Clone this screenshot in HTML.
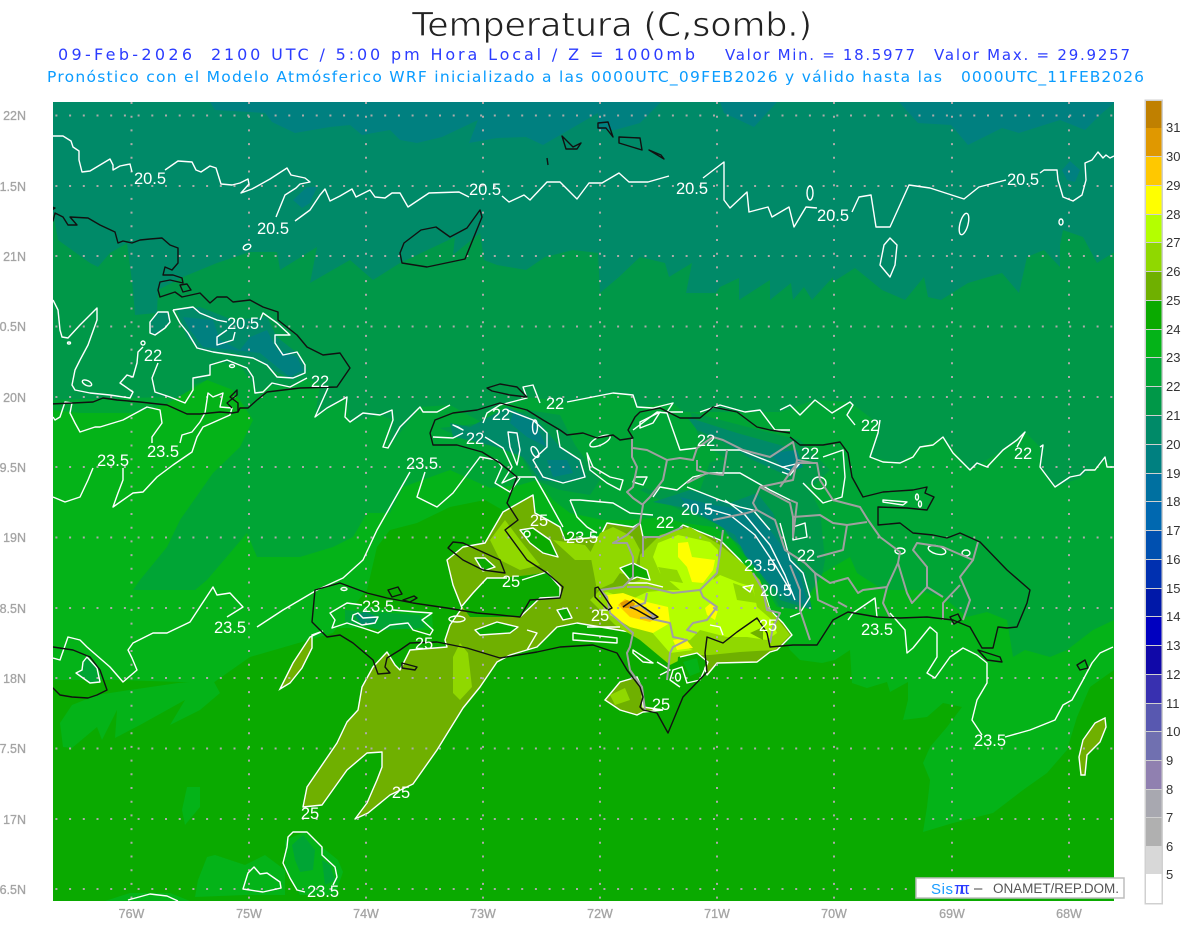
<!DOCTYPE html>
<html><head><meta charset="utf-8"><title>Temperatura</title>
<style>
html,body{margin:0;padding:0;background:#fff;width:1200px;height:927px;overflow:hidden}
svg{display:block;font-family:"Liberation Sans",sans-serif}
.w{fill:none;stroke:#fff;stroke-width:1.4;stroke-linejoin:round}
.k{fill:none;stroke:#111;stroke-width:1.4;stroke-linejoin:round}
.g{fill:none;stroke:#a0a0a0;stroke-width:2;stroke-linejoin:round}
.l text{fill:#fff;font-size:16.5px;text-anchor:middle}
.ax text{fill:#a4a4a4;font-size:12.5px;stroke:#a4a4a4;stroke-width:.3}
.cb text{fill:#333;font-size:13px}
.d{font-family:"DejaVu Sans",sans-serif}
</style></head><body>
<svg width="1200" height="927" viewBox="0 0 1200 927" xmlns="http://www.w3.org/2000/svg">
<rect width="1200" height="927" fill="#fff"/>
<text class="d" x="412" y="36" font-size="33" fill="#222" stroke="#fff" stroke-width=".7" textLength="400" lengthAdjust="spacingAndGlyphs">Temperatura (C,somb.)</text>
<g class="d" font-size="16" fill="#2b3cff">
<text x="58" y="60" textLength="134" lengthAdjust="spacing">09-Feb-2026</text>
<text x="211" y="60" textLength="484" lengthAdjust="spacing">2100 UTC / 5:00 pm Hora Local / Z = 1000mb</text>
<text x="725" y="60" font-size="15" textLength="190" lengthAdjust="spacing">Valor Min. = 18.5977</text>
<text x="934" y="60" font-size="15" textLength="196" lengthAdjust="spacing">Valor Max. = 29.9257</text>
</g>
<g class="d" font-size="15.5" fill="#0a9cff">
<text x="47" y="82" textLength="895" lengthAdjust="spacing">Pronóstico con el Modelo Atmósferico WRF inicializado a las 0000UTC_09FEB2026 y válido hasta las</text>
<text x="961" y="82" textLength="183" lengthAdjust="spacing">0000UTC_11FEB2026</text>
</g>
<svg x="53" y="102" width="1061" height="799" viewBox="53 102 1061 799">
<rect x="53" y="102" width="1061" height="799" fill="#008a68"/>
<g fill="#008080">
<polygon points="210,102 215,110 265,113 272,122 295,133 330,127 350,125 362,135 390,130 400,140 417,143 442,137 478,120 469,143 497,138 526,137 543,145 598,113 598,130 615,130 640,123 661,102"/>
<polygon points="720,102 724,113 754,127 777,102"/>
<polygon points="899,102 918,123 951,125 968,145 1002,128 1019,133 1060,120 1085,130 1100,115 1115,102"/>
<polygon points="293,200 307,187 317,187 310,203 302,208"/>
<polygon points="1062,170 1070,161 1080,170 1075,182 1067,180"/>
</g>
<polygon fill="#009848" points="53,213 58,240 90,263 98,267 110,253 127,243 133,290 135,315 157,313 158,290 183,277 217,263 250,252 277,252 280,270 317,247 310,283 350,260 373,280 400,263 455,237 453,255 480,233 484,260 497,265 526,270 545,257 573,250 598,253 600,293 619,277 640,257 665,263 669,277 692,263 686,293 716,293 720,287 739,278 739,300 770,280 770,300 791,283 793,300 804,287 812,300 833,277 833,282 855,268 882,290 905,300 924,277 928,297 941,300 968,283 1002,273 1019,293 1027,257 1044,250 1060,267 1060,245 1063,230 1083,237 1097,263 1113,253 1114,253 1114,901 53,901"/>
<polygon fill="#00a535" points="53,400 130,398 170,397 185,403 193,385 207,380 215,362 240,365 253,385 255,395 270,385 290,387 307,378 320,385 315,417 347,397 350,422 380,415 393,420 388,448 420,407 450,405 483,423 487,413 500,405 527,397 567,402 613,393 633,395 637,407 673,403 683,412 780,412 815,400 850,402 880,425 870,457 900,463 920,447 943,437 970,470 1003,450 1025,432 1040,447 1040,467 1055,487 1080,478 1105,460 1114,467 1114,901 53,901"/>
<g fill="#009848">
<polygon points="440,428 483,423 527,410 560,415 575,445 600,480 590,495 560,490 535,480 520,455 500,448 465,440"/>
<polygon points="640,490 680,470 720,460 770,460 800,470 820,510 825,560 815,610 790,625 770,590 750,555 720,525 680,510"/>
<polygon points="690,412 740,425 800,440 830,470 815,485 780,480 740,470 700,440"/>
</g>
<polygon fill="#04b318" points="53,410 80,413 133,413 165,405 207,380 233,390 253,420 240,447 213,473 180,520 167,547 140,580 133,590 195,590 207,580 247,533 257,557 300,557 333,547 353,537 367,513 390,513 403,487 450,470 490,488 520,485 537,480 553,500 570,513 603,520 630,520 663,517 683,523 713,527 730,537 750,563 777,607 800,610 823,573 850,557 857,573 883,590 917,590 943,597 967,617 987,612 1007,620 1013,657 1025,650 1050,657 1067,650 1093,630 1114,620 1114,901 53,901"/>
<polygon fill="#00a535" points="610,470 650,455 710,462 700,490 650,490"/>
<polygon fill="#0aaa00" points="53,680 120,680 213,683 250,657 333,633 350,610 367,590 377,547 390,530 417,523 450,507 485,500 520,520 600,540 720,540 777,620 790,650 800,660 822,663 835,660 850,650 852,683 867,688 887,682 890,692 908,682 908,700 903,720 927,717 943,703 962,707 947,727 930,747 923,763 930,780 927,807 923,832 953,823 993,813 1023,790 1047,773 1067,750 1077,717 1090,687 1114,670 1114,901 53,901"/>
<g fill="#04b318">
<polygon points="60,723 72,705 97,695 130,690 178,683 213,680 220,693 200,710 170,725 185,700 140,725 115,738 117,710 102,740 97,727 72,748 63,747"/>
<polygon points="207,857 215,855 245,865 265,855 285,870 285,895 245,895 195,897 198,880"/>
<polygon points="105,901 130,893 170,893 190,901"/>
<polygon points="187,787 200,787 200,807 185,825 182,810"/>
<polygon points="285,840 305,832 322,847 338,860 343,872 335,895 300,895 285,870"/>
<polygon points="330,613 347,603 393,610 432,613 433,630 413,630 390,625 363,628 332,628"/>
</g>
<g fill="#00a535">
<polygon points="292,845 303,835 315,850 313,870 300,872 295,860"/>
<polygon points="322,860 330,865 335,880 325,885"/>
<polygon points="87,657 97,668 100,682 90,683 76,673 82,670 83,662"/>
<polygon points="345,610 420,615 425,628 380,630 345,622"/>
</g>
<polygon fill="#008a68" points="177,310 200,307 233,320 267,317 277,337 297,353 307,370 293,380 273,370 260,360 233,353 200,350 187,337"/>
<polygon fill="#008080" points="183,317 213,320 220,340 240,350 250,337 267,330 277,350 297,357 303,370 290,377 277,367 260,353 233,350 203,347 190,330"/>
<polygon fill="#008a68" points="150,322 158,312 168,312 170,322 165,328 155,335 150,333"/>
<polygon fill="#008a68" points="450,423 470,427 507,407 537,420 560,447 577,457 587,477 567,483 540,480 523,457 497,447 470,440 453,437"/>
<polygon fill="#008080" points="513,413 533,420 547,447 527,437 510,423"/>
<polygon fill="#008080" points="547,460 567,460 573,473 553,477"/>
<polygon fill="#008a68" points="687,417 737,433 787,447 800,460 790,477 753,460 720,440 697,430"/>
<polygon fill="#008080" points="770,453 797,450 803,467 787,473"/>
<polygon fill="#008a68" points="653,502 690,490 730,503 757,493 773,513 785,547 805,573 812,610 780,600 763,565 730,537 713,513 680,507"/>
<polygon fill="#008080" points="680,497 713,505 750,510 770,530 785,550 800,575 808,605 790,600 770,585 745,555 735,535 710,520 690,510"/>
<polygon fill="#008a68" points="355,615 365,612 378,617 375,623 362,625"/>
<polygon class="w" style="fill:#6fb000" points="447,560 463,547 485,543 503,512 533,495 535,513 548,520 560,527 565,540 600,537 607,523 633,527 640,523 643,537 670,537 683,525 703,533 720,540 730,550 740,560 753,577 763,587 770,610 783,623 792,635 777,650 770,652 757,662 717,663 707,675 700,655 677,657 665,640 640,635 630,632 577,623 557,627 537,647 510,655 497,662 480,687 463,708 437,750 413,784 390,795 368,813 355,819 367,803 377,780 382,767 382,752 367,753 347,770 322,805 303,807 307,787 337,743 347,722 358,710 362,687 373,667 387,652 395,665 400,670 410,650 447,647 445,640 450,625 462,608 453,585"/>
<polygon fill="#6fb000" stroke="#fff" stroke-width="1.4" points="605,700 620,682 637,677 642,688 643,707 663,710 643,712 637,715 620,710"/>
<polygon fill="#6fb000" stroke="#fff" stroke-width="1.4" points="280,689 293,663 310,637 323,631 312,635 312,648 302,668 290,683"/>
<polygon fill="#6fb000" stroke="#fff" stroke-width="1.4" points="1079,757 1083,740 1095,723 1105,718 1106,727 1100,742 1087,755 1085,775 1081,775"/>
<polygon fill="#0aaa00" points="462,606 473,593 487,578 500,578 530,575 547,572 560,587 560,597 540,598 520,617 497,617 470,617"/>
<polygon fill="#90d800" points="640,555 660,535 690,527 720,545 745,565 760,580 770,610 790,635 775,650 740,652 710,655 690,655 670,665 640,640 615,625 590,600 600,590 625,585 640,580"/>
<polygon fill="#90d800" points="590,553 600,533 613,527 633,537 640,550 633,577 620,573 613,583 597,590"/>
<polygon fill="#90d800" points="490,540 505,520 520,540 540,565 520,570 500,560"/>
<polygon fill="#90d800" points="553,540 585,545 597,560 575,560"/>
<polygon fill="#90d800" points="453,657 460,643 468,653 472,687 460,700 453,693"/>
<polygon fill="#90d800" points="610,695 625,688 630,700 615,705"/>
<polygon fill="#b4ff00" points="658,543 678,535 710,542 718,550 718,567 712,583 702,588 720,575 740,583 753,587 757,607 772,620 777,633 767,640 747,637 727,637 700,630 690,640 673,643 693,650 670,653 650,630 623,620 610,610 603,593 607,592 630,600 647,592 670,590 680,590 660,573 653,557"/>
<polygon fill="#90d800" points="658,567 677,570 683,583 663,580"/>
<polygon fill="#90d800" points="733,583 753,590 757,603 737,600"/>
<polygon fill="#6fb000" points="750,633 763,627 763,640"/>
<polygon fill="#ffff00" points="678,543 688,542 692,557 715,560 713,570 703,583 692,582 687,567 678,557"/>
<polygon fill="#ffff00" points="607,595 623,593 647,602 668,607 670,623 653,633 630,627 610,615"/>
<polygon fill="#ffff00" points="705,608 712,602 718,610 715,620 707,615"/>
<polygon fill="#ffff00" points="673,640 685,638 693,648 677,650"/>
<polygon fill="#ffc800" points="618,605 625,599 640,607 658,617 650,622 630,617"/>
<polygon fill="#e09800" points="620,603 627,600 635,603 633,608 623,608"/>
<polygon fill="#0aaa00" points="620,568 633,563 647,570 650,580 637,577 630,580"/>
<polygon fill="#0aaa00" points="678,657 697,653 707,660 700,680 690,683 683,670 677,670"/>
<polygon fill="#04b318" points="683,662 697,658 700,672 690,676"/>
<polygon fill="#0aaa00" points="520,530 533,528 550,540 558,557 543,553 530,543"/>
<polygon fill="#0aaa00" points="475,558 485,558 495,567 483,571"/>
<polygon fill="#0aaa00" points="573,633 617,638 617,643 573,640"/>
<polygon fill="#0aaa00" points="475,630 497,622 518,627 510,633 480,635"/>
<polygon fill="#0aaa00" points="633,650 653,663 643,662 633,653"/>
<polygon fill="#0aaa00" points="557,610 567,608 572,618 563,620"/>
<g stroke="#aeaaaa" stroke-width="2" stroke-dasharray="2 11.7" fill="none">
<path d="M28 115.5H1135M28 186H1135M28 256H1135M28 326.5H1135M28 397H1135M28 467H1135M28 537.5H1135M28 608H1135M28 678H1135M28 748.5H1135M28 819H1135M28 889H1135"/>
<path d="M131.5 102V907M249 102V907M366 102V907M483 102V907M600 102V907M717 102V907M834 102V907M952 102V907M1069 102V907"/>
</g>
<g class="w">
<polyline points="53,136 63,136 71,141 73,147 79,151 79,160 81,168 82,172 90,171 100,165 110,159 113,165 113,170 120,166 130,164 132,172"/>
<polyline points="165,170 178,161 192,162 196,170 201,172 210,166 216,168 221,184 232,185 240,183 248,179 249,184 241,193 252,189 270,179 287,168 291,175 305,178 310,182 300,184 296,188 285,195 276,217"/>
<polyline points="295,221 310,210 320,195 325,189 330,201 340,196 352,189 356,197 370,190 375,197 385,198 392,193 400,193 408,207 429,193 459,192 469,197"/>
<polyline points="502,196 509,202 524,195 530,200 547,182 560,182 577,199 589,183 602,183 619,173 629,182 648,182 669,176"/>
<polyline points="703,178 724,162 724,200 730,208 747,192 749,212 768,207 772,217 789,207 794,227 806,207 817,208"/>
<polyline points="852,212 859,197 871,195 876,227 890,227 909,185 930,188 964,199 979,187 1006,180"/>
<polyline points="1040,173 1044,170 1057,170 1058,180 1063,197 1073,201 1082,195 1086,180 1085,163 1092,160 1098,152 1103,158 1106,155 1110,158 1114,156"/>
<ellipse cx="247" cy="247" rx="4" ry="2.5" transform="rotate(-25 247 247)"/>
<ellipse cx="810" cy="193" rx="3" ry="7"/>
<ellipse cx="1061" cy="222" rx="2" ry="3"/>
<ellipse cx="964" cy="224" rx="4" ry="11" transform="rotate(15 964 224)"/>
<polygon points="890,238 897,245 895,265 890,277 880,265 884,245"/>
<polygon points="150,322 158,312 168,312 170,322 165,328 155,335 150,333"/>
<polyline points="173,310 193,307 200,313 217,320 227,322"/>
<polyline points="227,330 217,337 217,345 233,340 235,332"/>
<polyline points="173,310 180,323 188,333 197,348 213,352 233,355 253,358 267,365 277,377 293,378 305,373 305,365 297,352 283,355 275,343 275,335 290,335 277,323 263,313 260,320"/>
<polyline points="53,300 58,310 60,330 62,337 68,338 80,325 97,308 97,320 88,345 80,360 75,370 72,385 75,390 90,393 110,395 130,398 133,392 120,383 127,375 133,377 137,363 138,352 143,347"/>
<circle cx="143" cy="343" r="2"/>
<ellipse cx="69" cy="343" rx="1.5" ry="1"/>
<ellipse cx="87" cy="383" rx="5" ry="2.5" transform="rotate(25 87 383)"/>
<polyline points="158,363 152,378 155,392 170,397 185,403 193,390 193,378 210,375 210,365 227,360 247,368 253,377 255,393 263,392 272,383 290,387 307,378"/>
<ellipse cx="232" cy="366" rx="2.5" ry="1.5"/>
<polyline points="328,388 315,417 327,408 347,397 345,417 350,422 363,413 380,415 392,410 393,420 383,447 388,448 400,427 420,407 423,412 437,412 450,405"/>
<polyline points="567,402 613,393 633,395 637,407 653,408 673,403 667,412 683,412"/>
<polyline points="483,423 487,413 500,405 527,398 523,387 533,385 540,403"/>
<polyline points="433,437 453,438 463,433"/>
<polyline points="485,437 503,448 512,467 502,483 515,477 535,477 547,498 563,527"/>
<polygon points="453,425 463,430 458,427"/>
<polygon points="508,432 517,433 520,450 517,465 510,447"/>
<ellipse cx="535" cy="427" rx="2.5" ry="7"/>
<ellipse cx="535" cy="452" rx="3" ry="6" transform="rotate(-30 535 452)"/>
<polyline points="507,410 533,420 547,433 547,447 533,460 543,477 563,483 585,477 580,460 560,447 557,430"/>
<polygon points="587,453 593,467 610,477 623,480 620,490 607,483 590,470"/>
<polyline points="570,500 580,500 613,503 630,513 653,515"/>
<polyline points="570,500 577,517 587,527 597,533"/>
<polygon points="635,477 647,477 643,485 633,482"/>
<ellipse cx="600" cy="441" rx="11" ry="4" transform="rotate(-25 600 441)"/>
<polyline points="633,430 657,412 667,413 680,450 697,448"/>
<polygon points="640,422 660,412 653,423 640,428"/>
<polyline points="653,497 660,487 677,490 693,477 710,473 740,473 770,490 790,500"/>
<polyline points="687,487 720,500 740,507 753,510 770,530"/>
<polyline points="725,500 745,515 770,545 785,575 795,600"/>
<polyline points="705,508 730,515 755,535 775,565 790,590"/>
<polyline points="780,523 790,560 803,573 810,597 800,613 790,617"/>
<polygon points="793,527 805,523 807,537 793,540"/>
<ellipse cx="819" cy="483" rx="7" ry="6"/>
<polyline points="783,467 800,463 790,475 782,472"/>
<polyline points="823,457 843,450 845,477 842,497 823,503 803,483"/>
<polyline points="710,450 740,450 790,470"/>
<polygon points="883,500 907,502 903,505 883,502"/>
<ellipse cx="937" cy="550" rx="9" ry="4" transform="rotate(15 937 550)"/>
<ellipse cx="966" cy="553" rx="4" ry="3"/>
<ellipse cx="900" cy="551" rx="5" ry="3"/>
<ellipse cx="917" cy="497" rx="1.5" ry="3"/>
<ellipse cx="920" cy="504" rx="1.5" ry="3"/>
<polyline points="700,412 720,405 745,412 760,410 775,430 790,430"/>
<polyline points="880,420 878,433 870,457 883,462 900,463 913,457 920,447 933,445 943,437 953,453 970,470 977,463 987,467 1003,450 1017,440 1025,432 1017,447"/>
<polyline points="1040,447 1043,445 1040,467 1055,487 1070,477 1080,475 1085,470 1095,470 1105,457 1107,467 1114,467"/>
<polyline points="780,410 790,405 800,415 815,400 832,413 850,402 853,405 847,415 855,425"/>
<polyline points="53,497 65,502 80,497 88,480 93,468"/>
<polyline points="123,468 123,480 118,493 113,507 133,493 143,492 157,477 173,465 192,452 197,437 203,427 230,415 232,408 220,407 223,393 213,397 208,393 205,413 200,422 192,432 182,435 180,443"/>
<polyline points="152,443 152,437 162,423 160,410 147,407 123,420 100,427 95,427 80,432 75,423 70,413 72,403 65,402 60,417 55,420 53,417"/>
<polyline points="410,472 377,530 363,560 343,578 317,590 283,610 257,627"/>
<polyline points="227,617 243,607 230,593 217,595 213,587 190,622 167,633 153,633 133,643 128,650 132,658 137,670 123,682 110,667 87,647 80,640 68,637 60,660 53,658"/>
<polyline points="425,472 417,497 437,507 453,493 480,457 497,460 502,467 495,483 510,492 520,478"/>
<polyline points="848,620 853,613 875,598 877,617"/>
<polyline points="890,613 905,630 907,653 913,648 930,627 937,633 937,657 927,673 935,678 950,657 963,648 977,655 987,663 987,683 977,700 972,720 982,735"/>
<polyline points="1005,737 1030,730 1050,722 1055,720 1063,705 1072,700 1083,680 1092,663 1100,653 1113,647"/>
<polyline points="333,885 337,877 335,867 322,855 322,847 307,832 293,832 288,837 287,847 283,863 290,878 297,890 305,892"/>
<polygon points="254,867 260,874 267,873 280,882 281,888 263,892 243,889 248,873"/>
<polyline points="128,900 150,894 167,896 178,901"/>
<polygon points="87,657 97,668 100,682 90,683 76,673 82,670 83,662"/>
<polyline points="362,605 347,603 330,613 335,620 332,628 347,623 363,628 378,633 390,625 408,623 413,630 430,635 433,630 422,620 432,613 417,612 393,610"/>
<polygon points="353,615 358,613 363,618 378,617 375,623 362,625 352,620"/>
<ellipse cx="344" cy="589" rx="3" ry="1.5"/>
<ellipse cx="457" cy="619" rx="8" ry="3"/>
<polyline points="462,606 473,593 487,578 507,578"/>
<polyline points="522,580 547,572 560,587 560,597 540,598 520,617"/>
<polygon points="520,530 533,528 550,540 558,557 543,553 530,543"/>
<circle cx="527" cy="534" r="3"/>
<polygon points="475,558 485,558 495,567 483,571"/>
<polygon points="557,610 567,608 572,618 563,620"/>
<polygon points="475,630 497,622 518,627 510,633 480,635"/>
<polyline points="527,630 537,633 527,650"/>
<polygon points="573,633 617,638 617,643 573,640"/>
<polyline points="587,627 620,627"/>
<polygon points="620,568 633,563 647,570 650,580 637,577 630,580"/>
<polyline points="627,583 647,583 663,587"/>
<polygon points="633,650 653,663 643,662 633,653"/>
<polyline points="657,662 670,670 660,675"/>
<polyline points="680,657 697,653 708,662 700,680 687,683 682,667 673,670 670,680 680,687"/>
<ellipse cx="678" cy="677" rx="2.5" ry="4"/>
<polygon points="743,587 753,585 750,592"/>
<polyline points="710,625 720,627 723,635"/>
</g>
<g class="g">
<polyline points="632,438 632,457 637,467 633,487 627,492 633,498 643,505 640,523 627,535 613,543 627,543 633,557 633,577 623,587 600,590 607,597 610,613 633,633 630,647 627,653 630,670 642,687 645,710"/>
<polyline points="627,587 647,587 673,593 700,590 717,573 720,553 723,530"/>
<polyline points="643,557 643,537 660,537 683,527"/>
<polyline points="647,593 645,603 630,608 640,605 655,617 640,618"/>
<polyline points="647,618 670,623 673,637 687,640 673,647 670,653 667,680"/>
<polyline points="700,590 703,597 717,607 707,620 693,623 687,630 697,633"/>
<polyline points="753,573 763,590 767,610 780,613 773,627 770,643"/>
<polyline points="633,448 647,450 667,460 680,458 693,460 697,448 713,437 723,440 743,450 770,457 793,442 797,460 813,463"/>
<polyline points="667,460 663,480 650,497 642,505"/>
<polyline points="697,460 697,470 707,473 687,483"/>
<polyline points="707,473 723,475 727,450"/>
<polyline points="797,460 793,480 760,487 753,503 757,510 747,513 713,520"/>
<polyline points="760,487 790,503 793,517"/>
<polyline points="780,487 797,463 817,463 820,480 833,500 860,507 868,520 880,537 900,552 898,563 887,587 883,603 890,617"/>
<polyline points="793,517 820,515 833,523 847,525 867,522"/>
<polyline points="847,525 843,550 817,557"/>
<polyline points="793,517 793,537 797,503 790,500"/>
<polyline points="898,563 907,593 912,603 927,587 927,567 913,550 917,543 943,547 973,560 978,542"/>
<polyline points="973,560 960,577 970,600 963,620"/>
<polyline points="960,585 943,603 943,620"/>
<polyline points="927,587 943,597"/>
<polyline points="887,587 863,590 858,593 848,578 830,583 815,573 818,600 835,608 837,613"/>
<polyline points="838,602 847,607"/>
<polyline points="805,563 815,573"/>
<polyline points="790,565 800,590 800,610 810,640"/>
<polyline points="757,510 775,520 785,550 805,563"/>
</g>
<g class="k">
<polyline points="35,205 40,203 55,208 47,213 53,221 55,213 63,217 68,225 77,225 70,217 88,218 100,225 115,232 118,243 123,241 132,243 140,240 150,239 162,238 170,245 178,248 178,263 172,270 165,267 163,275 173,275 182,278 183,283 170,280 160,282 158,290 160,297 175,292 182,297 200,293 210,303 217,297 227,297 233,302 250,300 263,307 278,312 278,320 297,335 307,347 323,355 340,353 350,368 337,387 300,388 267,392 257,400 248,408 240,408 238,412 232,413 220,412 200,414 187,414 167,405 140,402 117,400 103,398 93,402 73,403 50,404 35,407"/>
<polyline points="232,408 227,403 237,395 237,390 230,397 238,403 238,412"/>
<polygon points="180,285 187,284 191,290 183,292"/>
<polygon points="598,123 608,122 613,137 606,128 598,128"/>
<polygon points="619,137 640,138 642,150 619,143"/>
<polygon points="649,150 661,155 664,159"/>
<polygon points="562,136 573,147 581,143 577,149 566,149"/>
<polyline points="547,158 548,165"/>
<polygon points="402,263 427,267 465,259 482,217 480,210 467,228 450,237 436,227 421,230 404,243 400,253"/>
<polygon points="487,388 500,384 517,387 527,397 510,395 492,391"/>
<polyline points="430,433 435,420 453,413 477,410 500,403 527,410 543,420 560,430 567,435 583,433 597,438 613,435 620,440 633,438 628,430 635,417 640,412 660,408 680,418 700,418 713,407 737,412 757,427 770,430 790,433"/>
<polyline points="790,437 800,445 823,445 840,442 848,453 852,477 863,497 883,492 913,490 927,487 925,493 934,497 927,510 907,508 878,507 878,525 900,523 913,533 933,535 947,538 960,533 980,542 1007,570 1030,590 1027,603 1017,627 1007,628 998,627 993,648 982,648 970,627 953,620 927,617 900,618 877,617 848,612 833,620 817,645 793,645 770,647 767,633 757,618 737,632 723,643 707,637 705,653 707,672 683,697 668,733 657,713 643,710 640,707 643,697 640,687 627,670 617,653 593,645 560,647 537,652 500,658 467,648 437,642 410,643 400,650 387,658 385,667 390,673 378,674 373,660 353,643 340,635 327,637 312,622 315,590 340,583 367,593 387,598 413,603 447,608 477,613 500,615 520,617 530,600 560,598 563,587 547,573 527,560 505,530 518,520 507,503 517,477 500,463 482,452 457,445 433,445 430,433"/>
<polygon points="448,548 453,542 463,543 500,560 505,573 483,570 463,560"/>
<polygon points="402,663 417,667 415,670 402,668"/>
<polygon points="388,590 398,587 402,594 392,597"/>
<polygon points="403,600 414,596 417,598 410,602"/>
<polyline points="35,633 40,640 53,647 73,650 90,657 100,670 107,690 97,695 88,698 72,697 60,695 53,688 37,687 42,685 35,682"/>
<polyline points="623,607 633,600 658,617 653,619 637,610 630,607"/>
<polygon points="595,588 598,587 612,608 608,610 595,597"/>
<polygon points="978,650 1000,657 1002,662 987,660"/>
<polygon points="1077,665 1085,660 1088,668 1080,670"/>
<polygon points="950,617 958,614 961,620 954,624"/>
</g>
</svg>
<g class="l">
<text x="150" y="184">20.5</text><text x="273" y="234">20.5</text><text x="485" y="195">20.5</text><text x="692" y="194">20.5</text><text x="833" y="221">20.5</text><text x="1023" y="185">20.5</text><text x="243" y="329">20.5</text><text x="697" y="515">20.5</text><text x="776" y="596">20.5</text>
<text x="153" y="361">22</text><text x="320" y="387">22</text><text x="501" y="420">22</text><text x="475" y="444">22</text><text x="555" y="409">22</text><text x="706" y="446">22</text><text x="810" y="459">22</text><text x="870" y="431">22</text><text x="1023" y="459">22</text><text x="665" y="528">22</text><text x="806" y="561">22</text>
<text x="113" y="466">23.5</text><text x="163" y="457">23.5</text><text x="422" y="469">23.5</text><text x="582" y="543">23.5</text><text x="378" y="612">23.5</text><text x="230" y="633">23.5</text><text x="877" y="635">23.5</text><text x="990" y="746">23.5</text><text x="323" y="897">23.5</text><text x="760" y="571">23.5</text>
<text x="539" y="526">25</text><text x="511" y="587">25</text><text x="600" y="621">25</text><text x="424" y="649">25</text><text x="768" y="631">25</text><text x="661" y="710">25</text><text x="401" y="798">25</text><text x="310" y="819">25</text>
</g>
<g class="ax" text-anchor="end">
<text x="26" y="120">22N</text><text x="26" y="191">1.5N</text><text x="26" y="261">21N</text><text x="26" y="331">0.5N</text><text x="26" y="402">20N</text><text x="26" y="472">9.5N</text><text x="26" y="542">19N</text><text x="26" y="613">8.5N</text><text x="26" y="683">18N</text><text x="26" y="753">7.5N</text><text x="26" y="824">17N</text><text x="26" y="894">6.5N</text>
</g>
<g class="ax" text-anchor="middle">
<text x="131.5" y="918">76W</text><text x="249" y="918">75W</text><text x="366" y="918">74W</text><text x="483" y="918">73W</text><text x="600" y="918">72W</text><text x="717" y="918">71W</text><text x="834" y="918">70W</text><text x="952" y="918">69W</text><text x="1069" y="918">68W</text>
</g>
<rect x="916" y="878" width="208" height="20" fill="#fff" stroke="#bdbdbd" stroke-width="1.5"/>
<text x="931" y="894" font-size="15" fill="#1a9cff" textLength="22">Sis</text>
<text x="954" y="894" font-size="17" fill="#2b3cff" textLength="16">ππ</text>
<text x="974" y="893" font-size="15" fill="#444">–</text>
<text x="993" y="893" font-size="13.5" fill="#555" textLength="126" lengthAdjust="spacing">ONAMET/REP.DOM.</text>
<rect x="1144.5" y="99.5" width="18.5" height="805" fill="#d0d0d0"/>
<g>
<rect x="1146" y="101" width="15.5" height="27" fill="#c08000"/>
<rect x="1146" y="128" width="15.5" height="28" fill="#e09800"/>
<rect x="1146" y="157" width="15.5" height="28" fill="#ffc800"/>
<rect x="1146" y="186" width="15.5" height="28" fill="#ffff00"/>
<rect x="1146" y="215" width="15.5" height="27" fill="#b4ff00"/>
<rect x="1146" y="243" width="15.5" height="28" fill="#90d800"/>
<rect x="1146" y="272" width="15.5" height="28" fill="#6fb000"/>
<rect x="1146" y="301" width="15.5" height="28" fill="#0aaa00"/>
<rect x="1146" y="330" width="15.5" height="27" fill="#04b318"/>
<rect x="1146" y="358" width="15.5" height="28" fill="#00a535"/>
<rect x="1146" y="387" width="15.5" height="28" fill="#009848"/>
<rect x="1146" y="416" width="15.5" height="28" fill="#008a68"/>
<rect x="1146" y="445" width="15.5" height="28" fill="#008080"/>
<rect x="1146" y="474" width="15.5" height="27" fill="#0070a0"/>
<rect x="1146" y="502" width="15.5" height="28" fill="#0068b0"/>
<rect x="1146" y="531" width="15.5" height="28" fill="#0050b0"/>
<rect x="1146" y="560" width="15.5" height="28" fill="#0030b0"/>
<rect x="1146" y="589" width="15.5" height="27" fill="#0018a8"/>
<rect x="1146" y="617" width="15.5" height="28" fill="#0000c0"/>
<rect x="1146" y="646" width="15.5" height="28" fill="#1008a8"/>
<rect x="1146" y="675" width="15.5" height="28" fill="#3830b0"/>
<rect x="1146" y="704" width="15.5" height="27" fill="#5858b0"/>
<rect x="1146" y="732" width="15.5" height="28" fill="#7070b0"/>
<rect x="1146" y="761" width="15.5" height="28" fill="#9080b0"/>
<rect x="1146" y="790" width="15.5" height="27" fill="#a8a8b0"/>
<rect x="1146" y="818" width="15.5" height="28" fill="#b0b0b0"/>
<rect x="1146" y="846" width="15.5" height="28" fill="#d8d8d8"/>
<rect x="1146" y="874" width="15.5" height="29" fill="#ffffff"/>
</g>
<g class="cb">
<text x="1166" y="132">31</text><text x="1166" y="161">30</text><text x="1166" y="190">29</text><text x="1166" y="219">28</text><text x="1166" y="247">27</text><text x="1166" y="276">26</text><text x="1166" y="305">25</text><text x="1166" y="334">24</text><text x="1166" y="362">23</text><text x="1166" y="391">22</text><text x="1166" y="420">21</text><text x="1166" y="449">20</text><text x="1166" y="478">19</text><text x="1166" y="506">18</text><text x="1166" y="535">17</text><text x="1166" y="564">16</text><text x="1166" y="593">15</text><text x="1166" y="621">14</text><text x="1166" y="650">13</text><text x="1166" y="679">12</text><text x="1166" y="708">11</text><text x="1166" y="736">10</text><text x="1166" y="765">9</text><text x="1166" y="794">8</text><text x="1166" y="822">7</text><text x="1166" y="851">6</text><text x="1166" y="879">5</text>
</g>
</svg>
</body></html>
